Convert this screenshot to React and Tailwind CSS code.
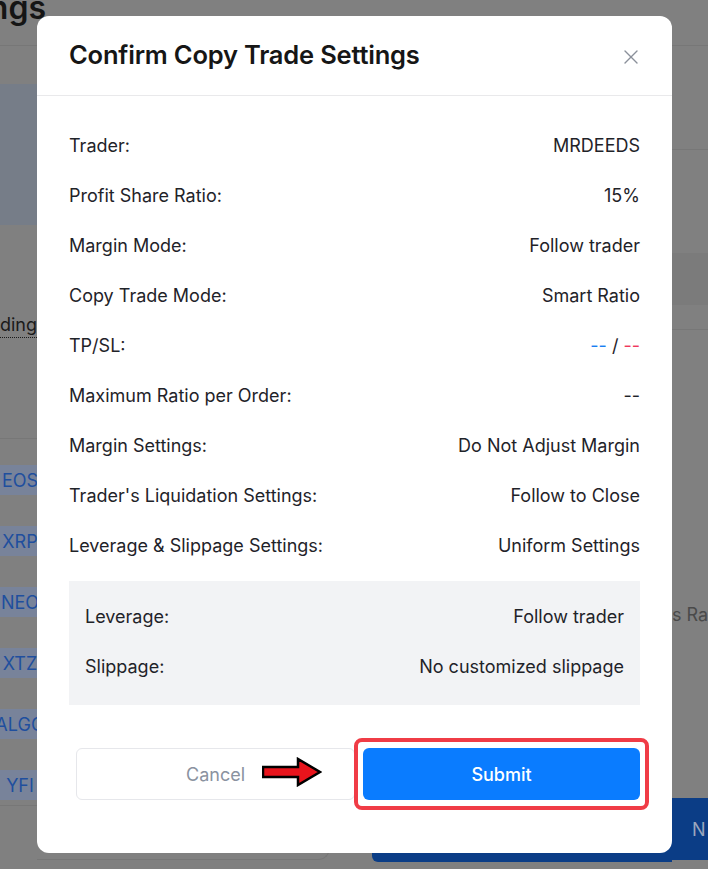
import React from "react";
import { X } from "lucide-react";

const rows = [
  { label: "Trader:", value: "MRDEEDS" },
  { label: "Profit Share Ratio:", value: "15%" },
  { label: "Margin Mode:", value: "Follow trader" },
  { label: "Copy Trade Mode:", value: "Smart Ratio" },
  { label: "TP/SL:", value: "tpsl" },
  { label: "Maximum Ratio per Order:", value: "--" },
  { label: "Margin Settings:", value: "Do Not Adjust Margin" },
  { label: "Trader's Liquidation Settings:", value: "Follow to Close" },
  { label: "Leverage & Slippage Settings:", value: "Uniform Settings" },
];

const coins = ["EOS", "XRP", "NEO", "XTZ", "ALGO", "YFI"];

const Row = ({ label, value }) => (
  <div className="flex h-[50px] items-center justify-between">
    <span>{label}</span>
    {value === "tpsl" ? (
      <span>
        <span className="text-[#1a7ef2]">--</span>
        <span> / </span>
        <span className="text-[#f0385c]">--</span>
      </span>
    ) : (
      <span>{value}</span>
    )}
  </div>
);

const Arrow = () => (
  <svg width="60" height="30" viewBox="0 0 60 30" className="absolute left-[193px] top-[9px]">
    {/* 강조 화살표 */}
    <polygon
      points="1,10 36,10 36,2 58,15 36,28 36,20 1,20"
      fill="#e8141c"
      stroke="#000"
      strokeWidth="2.5"
      strokeLinejoin="miter"
    />
  </svg>
);

export default function App() {
  return (
    <div
      className="relative h-[869px] w-[708px] overflow-hidden bg-[#808080]"
      style={{ fontFamily: "Inter, 'Liberation Sans', sans-serif" }}
    >
      {/* 뒤쪽 페이지 (어둡게 처리됨) */}
      <div className="flex h-full flex-col">
        <div className="flex h-[46px] shrink-0 border-b border-[#777]">
          <div className="flex w-[46px] justify-end overflow-hidden">
            <span className="-mt-[12px] whitespace-nowrap text-[32px] font-semibold leading-[40px] text-[#151515]">
              Settings
            </span>
          </div>
        </div>

        <div className="flex flex-1">
          {/* 왼쪽 */}
          <div className="flex w-[37px] shrink-0 flex-col">
            <div className="h-[38px]" />
            <div className="h-[141px] bg-[#767d88]" />
            <div className="h-[89px]" />
            <div className="flex h-[24px] justify-end overflow-hidden border-b border-dotted border-[#1a1a1a]">
              <span className="whitespace-nowrap text-[18px] leading-[22px] text-[#1a1a1a]">Trading</span>
            </div>
            <div className="h-[101px] border-b border-[#777]" />
            <div className="flex flex-col gap-[31px] pt-[26px]">
              {coins.map((c) => (
                <div key={c} className="flex h-[30px] w-[40px] items-center justify-center bg-[#78839a]">
                  <span className="text-[18px] text-[#1f4f9e]">{c}</span>
                </div>
              ))}
            </div>
            <div className="h-[6px] border-b border-[#777]" />
          </div>

          {/* 가운데 */}
          <div className="flex flex-1 flex-col justify-end">
            <div className="flex h-[69px]">
              <div className="h-[60px] w-[293px] rounded-br-[12px] border-b border-r border-[#767676]" />
              <div className="w-[42px]" />
              <div className="h-[62px] flex-1 rounded-l-[6px] bg-[#0b3d86]" />
            </div>
          </div>

          {/* 오른쪽 */}
          <div className="flex w-[36px] shrink-0 flex-col">
            <div className="h-[104px] border-b border-[#777]" />
            <div className="h-[103px]" />
            <div className="h-[52px] bg-[#7b7b7b]" />
            <div className="h-[25px] border-b border-[#777]" />
            <div className="h-[272px]" />
            <div className="flex h-[24px] items-center overflow-hidden">
              <span className="whitespace-nowrap text-[18px] text-[#4a4a4a]">s Ratio</span>
            </div>
            <div className="h-[172px]" />
            <div className="flex h-[62px] items-center bg-[#0b3d86] pl-[20px]">
              <span className="text-[18px] text-[#9aa6bd]">N</span>
            </div>
          </div>
        </div>
      </div>

      {/* 모달 */}
      <div className="absolute left-[37px] top-[16px] flex h-[837px] w-[635px] flex-col rounded-[12px] bg-white text-[#1f2329]">
        <div className="flex h-[80px] items-center justify-between border-b border-[#e9e9eb] px-8">
          <h2 className="text-[25.5px] font-semibold tracking-[-0.2px] text-[#161616]">Confirm Copy Trade Settings</h2>
          <X size={24} strokeWidth={1.4} className="-mr-[3px] mt-[2px] text-[#8a909a]" />
        </div>

        <div className="flex flex-col px-8 pt-[24px] text-[18px]">
          {rows.map((r) => (
            <Row key={r.label} {...r} />
          ))}

          <div className="mt-[11px] flex flex-col bg-[#f2f3f5] px-4 pb-[14px] pt-[10px]">
            <Row label="Leverage:" value="Follow trader" />
            <Row label="Slippage:" value="No customized slippage" />
          </div>

          <div className="relative mt-[43px] flex h-[52px] gap-2 pl-[7px]">
            <button className="flex-1 rounded-md border border-[#e6e7eb] bg-white text-[18px] text-[#8a929f]">
              Cancel
            </button>
            <Arrow />
            <div className="relative flex-1">
              <div className="absolute -inset-x-[9px] -inset-y-[10px] rounded-[8px] border-4 border-[#f03c46]" />
              <button className="relative h-full w-full rounded-md bg-[#0a7cff] text-[18px] font-medium text-white">
                Submit
              </button>
            </div>
          </div>
        </div>
      </div>
    </div>
  );
}
